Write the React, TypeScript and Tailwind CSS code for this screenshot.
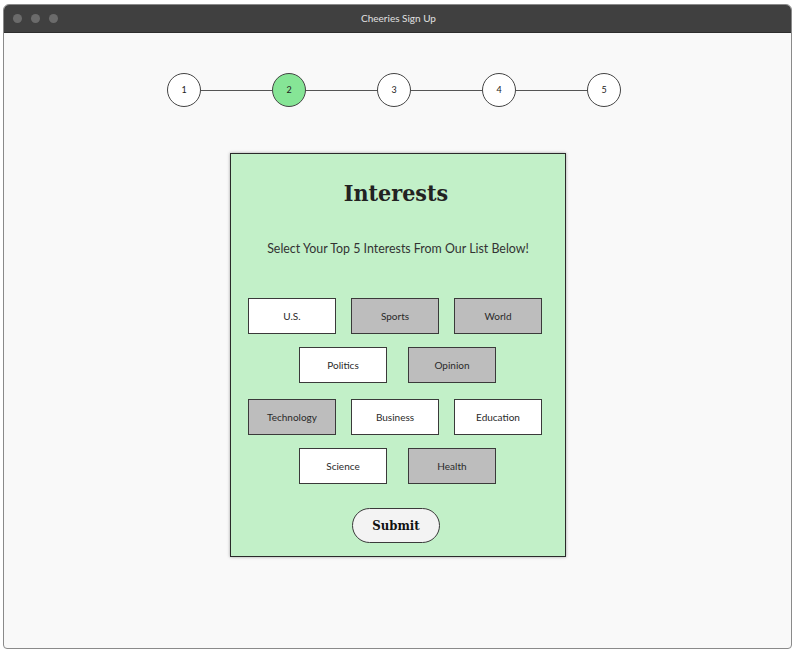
import React from "react";

const steps = [1, 2, 3, 4, 5];

function Btn({ label, gray }: { label: string; gray?: boolean }) {
  return (
    <div
      className={`w-[88px] h-[36px] flex items-center justify-center border border-[#3a3a3a] text-[10px] text-[#2a2a2a] ${gray ? "bg-[#bdbdbd]" : "bg-white"}`}
      style={{ fontFamily: "Lato, 'Noto Sans', sans-serif" }}
    >
      {label}
    </div>
  );
}

export default function App() {
  return (
    <div className="w-[796px] h-[653px] bg-white pl-[3px] pt-[4px]" style={{ fontFamily: "Lato, sans-serif" }}>
      <div className="w-[789px] h-[645px] flex flex-col rounded-t-[6px] rounded-b-[4px] border border-[#8a8a8a] bg-[#f9f9f9] overflow-hidden">
        {/* title bar */}
        <div className="h-[28px] shrink-0 bg-[#404040] flex items-center relative border-b border-[#2e2e2e]">
          <div className="flex gap-[9px] pl-[9px]">
            <div className="w-[9px] h-[9px] rounded-full bg-[#6b6b6b]" />
            <div className="w-[9px] h-[9px] rounded-full bg-[#6b6b6b]" />
            <div className="w-[9px] h-[9px] rounded-full bg-[#6b6b6b]" />
          </div>
          <div className="absolute inset-0 flex items-center justify-center text-[10px] text-[#e0e0e0] pl-[2px]">
            Cheeries Sign Up
          </div>
        </div>

        {/* stepper */}
        <div className="mt-[40px] pl-[163px] flex items-center">
          {steps.map((s, i) => (
            <React.Fragment key={s}>
              <div
                className={`w-[34px] h-[34px] rounded-full border border-[#444] flex items-center justify-center text-[9px] text-[#222] ${s === 2 ? "bg-[#86e596]" : "bg-white"}`}
              >
                {s}
              </div>
              {i < steps.length - 1 && <div className="w-[71px] h-px bg-[#555]" />}
            </React.Fragment>
          ))}
        </div>

        {/* card */}
        <div className="mt-[46px] ml-[226px] w-[336px] border border-[#2a2a2a] bg-[#c2f0c8] shadow-[0_0_3px_rgba(0,0,0,0.35)] flex flex-col pt-[24px] pb-[13px]">
          <div
            className="h-[30px] flex items-center justify-center text-[23px] font-bold text-[#222] pr-[4px]"
            style={{ fontFamily: "'DejaVu Serif Condensed', 'DejaVu Serif', serif" }}
          >
            Interests
          </div>
          <div
            className="mt-[31px] h-[20px] flex items-center justify-center text-[12.4px] text-[#333]"
            style={{ fontFamily: "Lato, sans-serif" }}
          >
            Select Your Top 5 Interests From Our List Below!
          </div>
          <div className="mt-[39px] flex gap-[15px] pl-[17px]">
            <Btn label="U.S." />
            <Btn label="Sports" gray />
            <Btn label="World" gray />
          </div>
          <div className="mt-[13px] flex gap-[21px] pl-[68px]">
            <Btn label="Politics" />
            <Btn label="Opinion" gray />
          </div>
          <div className="mt-[16px] flex gap-[15px] pl-[17px]">
            <Btn label="Technology" gray />
            <Btn label="Business" />
            <Btn label="Education" />
          </div>
          <div className="mt-[13px] flex gap-[21px] pl-[68px]">
            <Btn label="Science" />
            <Btn label="Health" gray />
          </div>
          <div className="mt-[24px] flex justify-center">
            <div
              className="ml-[-4px] w-[88px] h-[35px] rounded-full border border-[#3a3a3a] bg-[#f3f3f3] flex items-center justify-center text-[13px] font-bold text-[#111]"
              style={{ fontFamily: "'DejaVu Serif Condensed', 'DejaVu Serif', serif" }}
            >
              Submit
            </div>
          </div>
        </div>
      </div>
    </div>
  );
}
